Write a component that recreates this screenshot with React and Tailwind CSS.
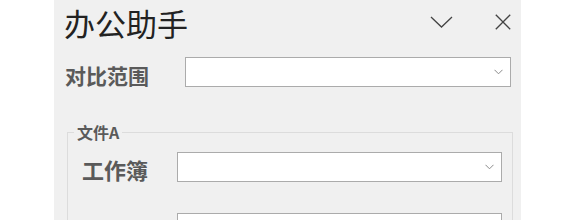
import React from "react";

const font = { fontFamily: '"Noto Sans CJK SC", "Noto Sans", sans-serif' };

function Chevron({ className }) {
  return (
    <svg className={className} width="9" height="6" viewBox="0 0 9 6" fill="none">
      <polyline points="0.5,0.8 4.5,4.8 8.5,0.8" stroke="#8a8a8a" strokeWidth="1" />
    </svg>
  );
}

function Select({ className }) {
  return (
    <div className={"h-[30px] bg-white border border-[#ababab] flex items-center justify-end pr-[7px] " + className}>
      <Chevron />
    </div>
  );
}

export default function App() {
  return (
    <div className="w-[570px] h-[220px] bg-white flex overflow-hidden" style={font}>
      <div className="ml-[54px] w-[467px] h-[220px] bg-[#f0f0f0] overflow-hidden flex flex-col">
        <div className="flex items-start h-[50px] shrink-0">
          <div className="ml-[10px] text-[31px] leading-[46px] text-[#222]">办公助手</div>
          <svg className="ml-auto mt-[16px]" width="23" height="12" viewBox="0 0 23 12" fill="none">
            <polyline points="1,1 11.5,11 22,1" stroke="#444" strokeWidth="1.3" />
          </svg>
          <svg className="ml-[42px] mt-[14px] mr-[10px]" width="16" height="16" viewBox="0 0 16 16" fill="none">
            <line x1="0.8" y1="0.8" x2="15.2" y2="15.2" stroke="#444" strokeWidth="1.3" />
            <line x1="15.2" y1="0.8" x2="0.8" y2="15.2" stroke="#444" strokeWidth="1.3" />
          </svg>
        </div>
        <div className="flex items-start mt-[7px] shrink-0">
          <div className="ml-[11px] w-[120px] text-[21px] font-bold text-[#5a5a5a] leading-[30px] mt-[3px]">对比范围</div>
          <Select className="w-[326px]" />
        </div>
        <fieldset className="ml-[13px] w-[446px] mt-[32px] border border-[#dcdcdc] shrink-0 pb-[40px]">
          <legend className="ml-[6px] px-[3px] text-[16px] font-bold text-[#5a5a5a] leading-[20px]">文件A</legend>
          <div className="flex items-start mt-[10px]">
            <div className="ml-[14px] w-[95px] text-[22px] font-bold text-[#5a5a5a] leading-[30px] mt-[2px]">工作簿</div>
            <Select className="w-[325px]" />
          </div>
          <div className="flex items-start mt-[29px]">
            <div className="ml-[14px] w-[95px]" />
            <Select className="w-[325px]" />
          </div>
        </fieldset>
      </div>
    </div>
  );
}
